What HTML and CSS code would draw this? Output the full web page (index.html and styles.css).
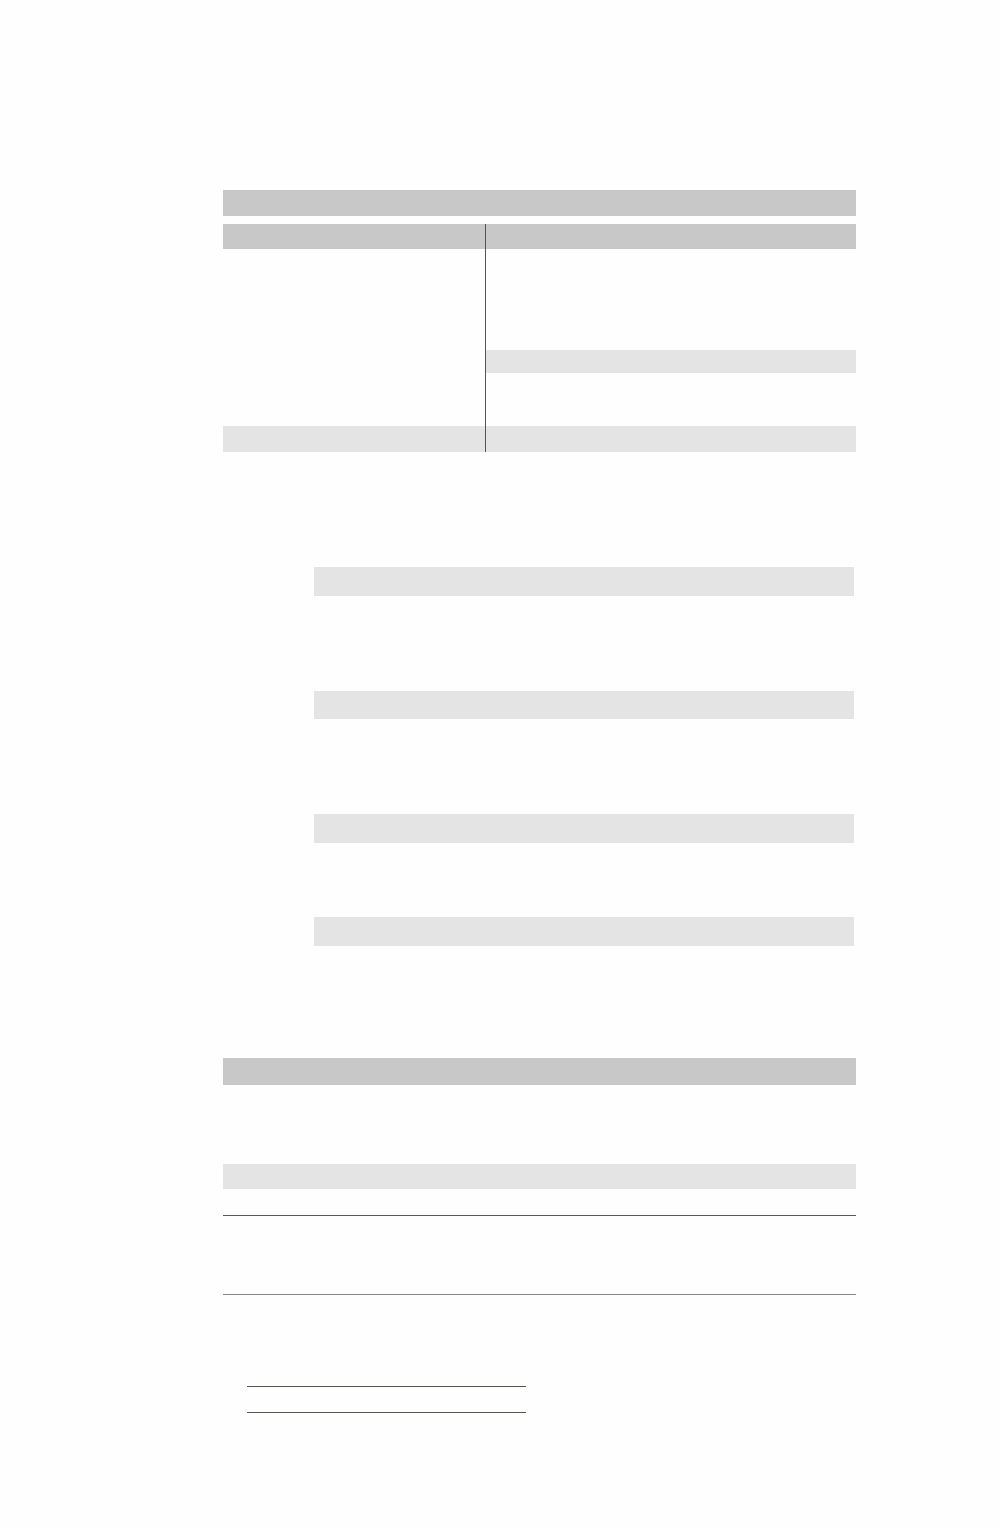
FILE: index.html
```html
<!DOCTYPE html>
<html>
<head>
<meta charset="utf-8">
<link rel="stylesheet" href="styles.css">
</head>
<body>
<div class="page">
  <section class="sec1">
    <div class="bar-dark h26"></div>
    <div class="split">
      <div class="col left">
        <div class="bar-dark h25"></div>
        <div class="grow"></div>
        <div class="bar-light h26"></div>
      </div>
      <div class="col right">
        <div class="bar-dark h25"></div>
        <div class="sp101"></div>
        <div class="bar-light h23"></div>
        <div class="grow"></div>
        <div class="bar-light h26"></div>
      </div>
    </div>
  </section>

  <section class="sec2">
    <div class="bar-light b1"></div>
    <div class="bar-light b2"></div>
    <div class="bar-light b3"></div>
    <div class="bar-light b4"></div>
  </section>

  <section class="sec3">
    <div class="bar-dark h27"></div>
    <div class="bar-light h25 mt79"></div>
    <div class="rule-table">
      <div class="cell c1"></div>
      <div class="cell c2"></div>
      <div class="cell c3"></div>
      <div class="cell c4"></div>
    </div>
  </section>

  <section class="sec4">
    <div class="sig"></div>
    <div class="sig second"></div>
  </section>
</div>
</body>
</html>
```

FILE: styles.css
```css
html, body {
  margin: 0;
  padding: 0;
  background: #fefefe;
  font-family: "Liberation Sans", Arial, sans-serif;
}
.page {
  width: 633px;
  margin-left: 223px;
  padding-top: 190px;
  height: 1338px;
}
.bar-dark {
  background: #c8c8c8;
}
.bar-light {
  background: #e4e4e4;
}
.h23 { height: 23px; }
.h25 { height: 25px; }
.h26 { height: 26px; }
.h27 { height: 27px; }
.split {
  display: flex;
  margin-top: 8px;
  height: 228px;
}
.col {
  display: flex;
  flex-direction: column;
}
.left { width: 262px; }
.right {
  flex: 1;
  border-left: 1px solid #555550;
}
.grow { flex: 1; }
.sp101 { height: 101px; }

.sec2 {
  margin-top: 115px;
  margin-left: 91px;
  width: 540px;
}
.sec2 .bar-light {
  height: 29px;
}
.b2 { margin-top: 95px; height: 28px !important; }
.b3 { margin-top: 95px; }
.b4 { margin-top: 74px; }

.sec3 {
  margin-top: 112px;
}
.mt79 { margin-top: 79px; }
.rule-table {
  margin-top: 26px;
  height: 78px;
  border-top: 1px solid #5a5852;
  border-bottom: 1px solid #8a8884;
  display: flex;
}
.cell { height: 100%; }
.c1 { width: 309px; }
.c2 { width: 162px; }
.c3 { width: 81px; }
.c4 { flex: 1; }

.sec4 {
  margin-top: 91px;
  margin-left: 24px;
  width: 279px;
}
.sig {
  border-top: 1px solid #55534c;
}
.sig.second {
  margin-top: 25px;
}
```
